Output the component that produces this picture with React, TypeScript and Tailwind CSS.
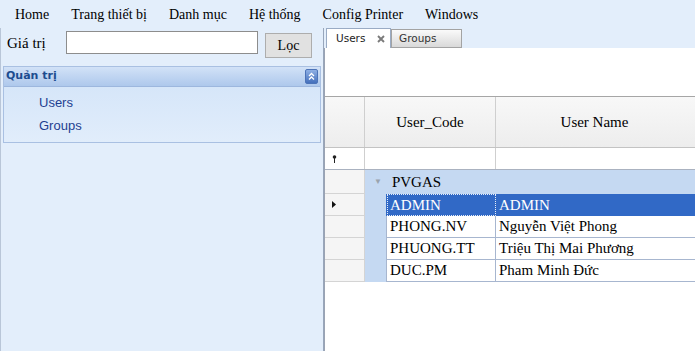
import React from 'react';

const serif = { fontFamily: '"Liberation Serif", "Times New Roman", serif' };
const tahoma = { fontFamily: '"DejaVu Sans", Tahoma, sans-serif' };

const menuItems = ['Home', 'Trang thiết bị', 'Danh mục', 'Hệ thống', 'Config Printer', 'Windows'];

const users = [
  { code: 'ADMIN', name: 'ADMIN' },
  { code: 'PHONG.NV', name: 'Nguyễn Việt Phong' },
  { code: 'PHUONG.TT', name: 'Triệu Thị Mai Phương' },
  { code: 'DUC.PM', name: 'Pham Minh Đức' },
];

function PinIcon() {
  return (
    <svg width="5" height="8" viewBox="0 0 5 8">
      <circle cx="2.5" cy="2" r="1.8" fill="#222" />
      <rect x="2" y="3" width="1" height="5" fill="#222" />
    </svg>
  );
}

function RowArrow() {
  return (
    <svg width="4" height="7" viewBox="0 0 4 7">
      <path d="M0 0 L4 3.5 L0 7 Z" fill="#111" />
    </svg>
  );
}

function CloseX() {
  return (
    <svg width="8" height="8" viewBox="0 0 8 8">
      <path d="M1 1 L7 7 M7 1 L1 7" stroke="#7b7b7b" strokeWidth="1.9" />
    </svg>
  );
}

function CollapseButton() {
  return (
    <div className="w-[13px] h-[15px] rounded-[2px] border border-[#4d74b8] bg-gradient-to-b from-[#8fb0e4] to-[#4570bc] flex items-center justify-center">
      <svg width="7" height="9" viewBox="0 0 7 9">
        <path d="M1 4 L3.5 1.5 L6 4" stroke="white" strokeWidth="1.3" fill="none" />
        <path d="M1 7.5 L3.5 5 L6 7.5" stroke="white" strokeWidth="1.3" fill="none" />
      </svg>
    </div>
  );
}

export default function App() {
  return (
    <div className="w-[695px] h-[351px] overflow-hidden bg-[#e3eefb] flex flex-col">
      {/* menu bar */}
      <div className="h-[28px] flex items-center gap-[22px] pl-[15px] pt-[1px] text-[14px] text-black" style={serif}>
        {menuItems.map((m) => (
          <span key={m} className="leading-none">{m}</span>
        ))}
      </div>

      <div className="flex flex-1 min-h-0">
        {/* left panel */}
        <div className="w-[324px] border-r border-[#98a6bb] border-l border-l-[#b9c6d8] flex flex-col">
          <div className="h-[38px] flex items-start pt-[3px] pl-[6px]">
            <span className="w-[59px] mt-[4px] text-[15px] leading-[17px] text-black" style={serif}>Giá trị</span>
            <input className="w-[192px] h-[23px] bg-white border border-[#8d8d8d] outline-none" />
            <button
              className="ml-[7px] mt-[2px] w-[47px] h-[25px] bg-[#e1e1e1] border border-[#adadad] text-[14px] text-black"
              style={serif}
            >
              Lọc
            </button>
          </div>

          <div className="mx-[2px] border border-[#a9c0e2]">
            <div className="h-[20px] flex items-center justify-between pl-[2px] pr-[2px] bg-gradient-to-b from-[#d2e2f7] to-[#aec8ec] border-b border-[#9db7de]">
              <span className="text-[11px] font-bold text-[#1d4c8f]" style={tahoma}>Quản trị</span>
              <CollapseButton />
            </div>
            <div className="h-[55px] pt-[4px] bg-gradient-to-b from-[#d6e6f9] to-[#e1edfb] text-[13px] text-[#1e3f91]" style={{ fontFamily: '"Liberation Sans", Arial, sans-serif' }}>
              <div className="h-[23px] leading-[23px] pl-[35px]">Users</div>
              <div className="h-[23px] leading-[23px] pl-[35px]">Groups</div>
            </div>
          </div>
        </div>

        {/* right panel */}
        <div className="flex-1 flex flex-col min-w-0">
          <div className="h-[20px] flex items-end pl-[2px]" style={tahoma}>
            <div className="h-[20px] w-[65px] bg-white border border-b-0 border-[#9aabc4] flex items-center pl-[9px] text-[10.5px] text-[#222]">
              <span>Users</span>
              <span className="ml-[12px] flex items-center"><CloseX /></span>
            </div>
            <div className="h-[19px] w-[71px] bg-gradient-to-b from-[#fafafa] to-[#d9d9d9] border border-[#a3a3a3] flex items-center pl-[7px] text-[10.5px] text-[#333]">
              Groups
            </div>
          </div>

          <div className="flex-1 bg-white border-l border-[#9aa3b3] pt-[48px] overflow-hidden" style={serif}>
            {/* header */}
            <div className="flex h-[52px] border-t border-b border-t-[#a6a6a6] border-b-[#c3c3c3] bg-gradient-to-b from-[#f8f8f8] to-[#ededed] text-[15px] text-black">
              <div className="w-[40px] border-r border-[#cfcfcf]" />
              <div className="w-[131px] border-r border-[#cfcfcf] flex items-center justify-center">User_Code</div>
              <div className="flex-1 flex items-center justify-center pr-[2px]">User Name</div>
            </div>

            {/* filter row */}
            <div className="flex h-[22px] border-b border-[#aab2c0]">
              <div className="w-[40px] border-r border-[#cfcfcf] flex items-center pl-[7px]">
                <PinIcon />
              </div>
              <div className="w-[131px] border-r border-[#cfcfcf]" />
              <div className="flex-1" />
            </div>

            {/* group row */}
            <div className="flex h-[24px] text-[15px] text-black">
              <div className="w-[40px] bg-[#f5f5f5] border-r border-b border-[#d4d4d4]" />
              <div className="flex-1 bg-[#c5d9f2] flex items-center">
                <span className="ml-[9px] text-[8px] leading-none text-[#9aa3ad]">▼</span>
                <span className="ml-[10px]">PVGAS</span>
              </div>
            </div>

            {users.map((u, i) => {
              const sel = i === 0;
              return (
                <div key={u.code} className="flex h-[22px] text-[15px] leading-none">
                  <div className="w-[40px] bg-[#f5f5f5] border-r border-b border-[#d4d4d4] flex items-center pl-[7px]">
                    {sel && <RowArrow />}
                  </div>
                  <div className="w-[21px] bg-[#c5d9f2] border-b border-[#c5d9f2]" />
                  {sel ? (
                    <>
                      <div className="w-[110px] bg-[#3169c6] border-l border-[#3169c6] text-white flex items-center">
                        <div className="h-full w-full border border-dotted border-[#e8eef8] flex items-center pl-[2px]">{u.code}</div>
                      </div>
                      <div className="flex-1 bg-[#3169c6] text-white flex items-center pl-[3px]">{u.name}</div>
                    </>
                  ) : (
                    <>
                      <div className="w-[110px] border-l border-b border-r border-[#a7b6cf] flex items-center pl-[3px] text-black">{u.code}</div>
                      <div className="flex-1 border-b border-[#a7b6cf] flex items-center pl-[3px] text-black">{u.name}</div>
                    </>
                  )}
                </div>
              );
            })}
          </div>
        </div>
      </div>
    </div>
  );
}
